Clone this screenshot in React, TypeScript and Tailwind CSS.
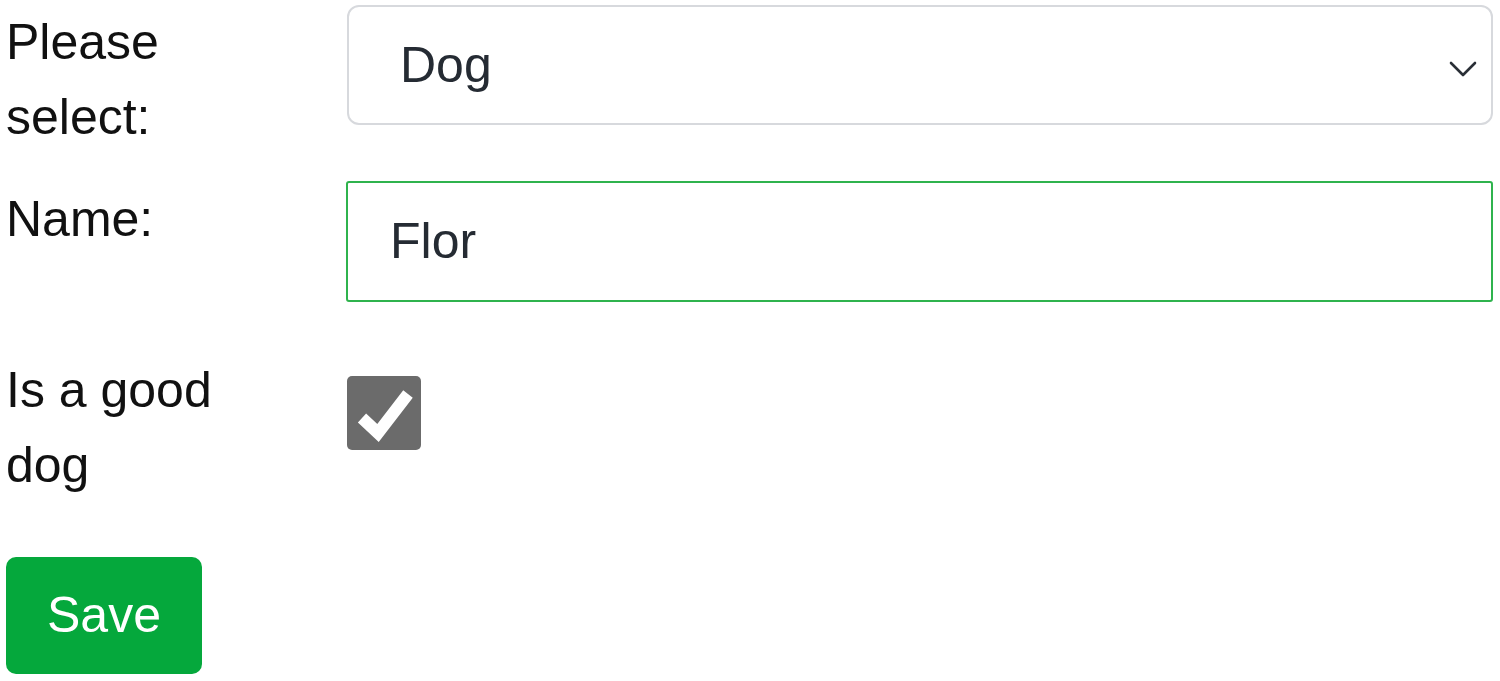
export default function App() {
  return (
    <div className="min-h-screen bg-white font-['Liberation_Sans',Arial,sans-serif] text-[50px] leading-[75px] text-[#111]">
      <div className="flex flex-col pt-[5px] pl-[6px] pr-[7px]">
        {/* select row */}
        <div className="flex">
          <label className="w-[341px] shrink-0">
            Please
            <br />
            select:
          </label>
          <div className="relative flex-1">
            <div className="flex h-[120px] items-center rounded-[12px] border-2 border-[#d7d9dd] bg-white pl-[51px] text-[#252b33]">
              Dog
            </div>
            <svg
              className="absolute right-[16px] top-[55px]"
              width="28"
              height="18"
              viewBox="0 0 28 18"
              fill="none"
              stroke="#2a2f36"
              strokeWidth="2.6"
              strokeLinecap="round"
              strokeLinejoin="round"
            >
              <path d="M2 3l12 12L26 3" />
            </svg>
          </div>
        </div>

        {/* name row */}
        <div className="mt-[26px] flex">
          <label className="w-[340px] shrink-0 pt-px">Name:</label>
          <div className="flex h-[121px] flex-1 items-center rounded-[3px] border-2 border-[#2fb34d] bg-white pl-[42px] text-[#252b33]">
            Flor
          </div>
        </div>

        {/* checkbox row */}
        <div className="mt-[51px] flex">
          <label className="w-[341px] shrink-0">
            Is a good
            <br />
            dog
          </label>
          <div className="pt-[23px]">
            <div className="h-[74px] w-[74px] rounded-[5px] bg-[#6b6b6b]">
              <svg width="74" height="74" viewBox="0 0 74 74">
                <polyline
                  points="15,42 31,57 61,18"
                  fill="none"
                  stroke="#fff"
                  strokeWidth="12"
                  strokeLinejoin="miter"
                />
              </svg>
            </div>
          </div>
        </div>

        {/* save */}
        <div className="mt-[54px]">
          <button className="flex h-[117px] w-[196px] items-center justify-center rounded-[10px] bg-[#05a83c] text-white">
            Save
          </button>
        </div>
      </div>
    </div>
  );
}
